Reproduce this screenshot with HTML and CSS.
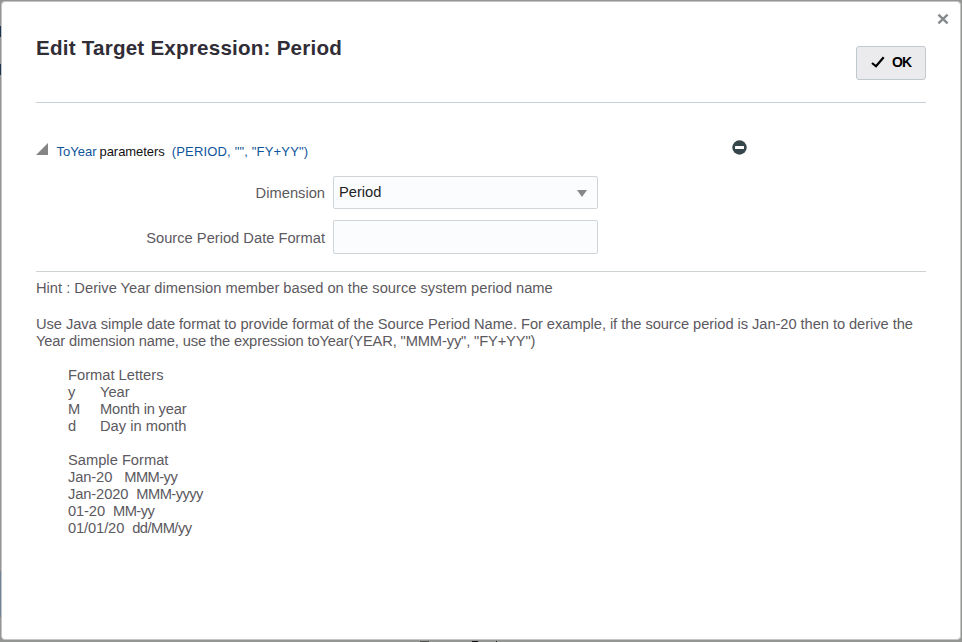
FILE: index.html
```html
<!DOCTYPE html>
<html lang="en">
<head>
  <meta charset="UTF-8" />
  <meta name="viewport" content="width=device-width, initial-scale=1.0"/>
  <title>Edit Target Expression</title>
  <link rel="stylesheet" href="styles.css">
</head>
<body>

  <!-- Dialog -->
  <div class="dialog">
    <button class="close" aria-label="Close">
      <svg width="12" height="12" viewBox="0 0 12 12"><path d="M1.4 1.6L10.6 10.4M10.6 1.6L1.4 10.4" stroke="#858a8d" stroke-width="2.4" fill="none"/></svg>
    </button>

    <div class="header">
      <h1>Edit Target Expression: Period</h1>
      <button class="ok">
        <svg width="14" height="12" viewBox="0 0 14 12"><path d="M1 7L5 10.3L12.7 1.2" stroke="#000" stroke-width="2.2" fill="none"/></svg>
        <span>OK</span>
      </button>
    </div>

    <!-- Expression parameters -->
    <div class="section">
      <div class="section-title">
        <svg class="disclosure" width="12" height="12" viewBox="0 0 12 12"><path d="M12 0V12H0Z" fill="#858585"/></svg>
        <span class="link func">ToYear</span>
        <span class="word">parameters</span>
        <span class="link args">(PERIOD, "", "FY+YY")</span>
        <svg class="remove" width="15" height="15" viewBox="0 0 15 15"><circle cx="7.5" cy="7.5" r="7.2" fill="#35474a"/><rect x="3" y="6" width="9" height="3" rx="0.5" fill="#fff"/></svg>
      </div>

      <div class="form">
        <label>Dimension</label>
        <div class="field select">
          <span>Period</span>
          <svg width="10" height="7" viewBox="0 0 10 7"><path d="M0 0H10L5 7Z" fill="#878787"/></svg>
        </div>
        <label for="format" class="format-label">Source Period Date Format</label>
        <input class="field" type="text" id="format" />
      </div>
    </div>

    <!-- Help text -->
    <div class="hint">
      <p class="summary">Hint : Derive Year dimension member based on the source system period name</p>
      <p class="usage"><span class="first">Use Java simple date format to provide format of the Source Period Name. For example, if the source period is Jan-20 then to derive the</span><br><span class="second">Year dimension name, use the expression toYear(YEAR, "MMM-yy", "FY+YY")</span></p>

      <div class="letters">
        <p>Format Letters</p>
        <dl>
          <dt>y</dt><dd>Year</dd>
          <dt>M</dt><dd class="month">Month in year</dd>
          <dt>d</dt><dd>Day in month</dd>
        </dl>
      </div>

      <div class="samples">
        <p>Sample Format</p>
        <p><span class="date">Jan-20</span><span class="pattern wide">MMM-yy</span></p>
        <p><span class="date">Jan-2020</span><span class="pattern">MMM-yyyy</span></p>
        <p><span class="date">01-20</span><span class="pattern">MM-yy</span></p>
        <p><span class="date">01/01/20</span><span class="pattern">dd/MM/yy</span></p>
      </div>
    </div>
  </div>

</body>
</html>
```
FILE: styles.css
```css
* {
  box-sizing: border-box;
}

body {
  margin: 0;
  height: 642px;
  padding: 1px 1px 2px;
  overflow: hidden;
  /* dimmed page showing round the dialog */
  background:
    linear-gradient(#1c3350, #1c3350) 0 26px / 1px 11px no-repeat,
    linear-gradient(#1c3350, #1c3350) 0 64px / 1px 11px no-repeat,
    linear-gradient(#6f8296, #6f8296) 0 571px / 1px 46px no-repeat,
    linear-gradient(#555, #555) 420px 641px / 9px 1px no-repeat,
    linear-gradient(#111, #111) 472px 641px / 6px 1px no-repeat,
    linear-gradient(#111, #111) 496px 641px / 1px 1px no-repeat,
    #939693;
  font-family: "Liberation Sans", Arial, sans-serif;
  font-size: 14.7px;
  line-height: 17px;
  color: #5c5960;
}

h1, p, dl, dd {
  margin: 0;
}

button {
  font-family: inherit;
  cursor: pointer;
}

.dialog {
  position: relative;
  height: 639px;
  padding: 0 34px;
  background: #fff;
  border: 1px solid #c5c5c5;
  border-radius: 4px;
}

.close {
  position: absolute;
  top: 11px;
  right: 11px;
  width: 12px;
  height: 12px;
  padding: 0;
  border: none;
  background: none;
}

.close svg {
  display: block;
}

.header {
  display: flex;
  justify-content: space-between;
  align-items: flex-start;
  height: 101px;
  padding-top: 33px;
  border-bottom: 1px solid #c9d0d5;
}

.header h1 {
  font-size: 20.6px;
  line-height: 26px;
  letter-spacing: 0.22px;
  color: #302d36;
}

.ok {
  display: flex;
  align-items: center;
  gap: 7px;
  width: 70px;
  height: 34px;
  margin-top: 11px;
  padding: 0 0 2px 14px;
  border: 1px solid #c2c9ce;
  border-radius: 3px;
  background: #ebebed;
  color: #000;
  font-size: 14px;
  font-weight: bold;
  letter-spacing: -1px;
}

.section {
  height: 169px;
  padding-top: 35px;
  border-bottom: 1px solid #cdd2d3;
}

.section-title {
  display: flex;
  height: 38px;
  padding-top: 5px;
  font-size: 13px;
  color: #111;
}

.disclosure {
  margin: 0 8.5px 0 0;
}

.link {
  color: #10559b;
}

.args {
  letter-spacing: 0.17px;
}

.word {
  margin: 0 7px 0 3px;
  letter-spacing: -0.05px;
}

.remove {
  margin: -3px 179px 0 auto;
}

.form {
  display: grid;
  grid-template-columns: 289px 265px;
  column-gap: 8px;
  row-gap: 11px;
}

.form label {
  padding-top: 9px;
  text-align: right;
}

.form .format-label {
  padding-top: 10px;
}

.field {
  width: 265px;
  height: 34px;
  border: 1px solid #cfd5d8;
  border-radius: 2px;
  background: #fbfcfd;
}

.select {
  display: flex;
  justify-content: space-between;
  height: 33px;
  padding: 7px 10px 0 5px;
  color: #222;
  font-size: 14.7px;
}

.select svg {
  margin-top: 6px;
}

.hint {
  padding-top: 8px;
}

.usage {
  margin-top: 19px;
  white-space: nowrap;
}

.first {
  letter-spacing: -0.066px;
}

.second {
  letter-spacing: -0.14px;
}

.letters,
.samples {
  margin: 17px 0 0 32px;
}

dl {
  display: grid;
  grid-template-columns: 32px auto;
}

.month {
  letter-spacing: -0.2px;
}

.date {
  letter-spacing: -0.12px;
}

.pattern {
  margin-left: 8px;
  letter-spacing: -0.55px;
}

.wide {
  margin-left: 12px;
}
```
